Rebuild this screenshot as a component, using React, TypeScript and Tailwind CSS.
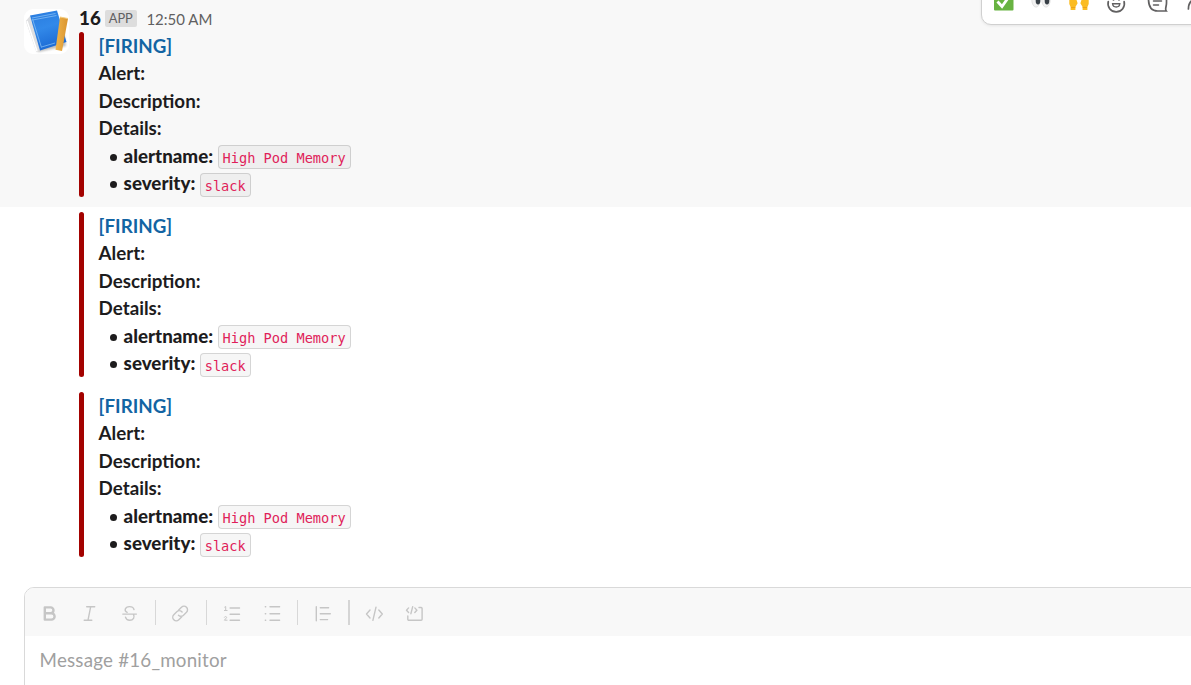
import type { ReactNode } from 'react';

function Code({ children }: { children: ReactNode }) {
  return (
    <code className="ml-[4.4px] mt-[3.3px] flex h-6 items-center rounded-[4px] border border-[#1d1c1d]/15 bg-[#1d1c1d]/[0.04] px-[4px] pt-[2.6px] font-['DejaVu_Sans_Mono',monospace] text-[13.65px] font-normal leading-5 text-[#e01e5a]">
      {children}
    </code>
  );
}

function Detail({ label, value }: { label: string; value: string }) {
  return (
    <li className="flex h-[27.5px] items-start pl-[11.2px]">
      <span className="mr-[6.8px] mt-[12px] size-[7px] shrink-0 rounded-full bg-[#1d1c1d]" />
      <b>{label}</b>
      <Code>{value}</Code>
    </li>
  );
}

function Attachment() {
  return (
    <div className="flex h-[165px] gap-[14.6px]">
      <div className="w-[5px] rounded-lg bg-[#a30200]" />
      <div className="-mt-[0.3px] text-[18.75px] font-bold leading-[27.5px]">
        <div className="text-[#1264a3]">[FIRING]</div>
        <div>Alert:</div>
        <div>Description:</div>
        <div>Details:</div>
        <ul>
          <Detail label="alertname:" value="High Pod Memory" />
          <Detail label="severity:" value="slack" />
        </ul>
      </div>
    </div>
  );
}

function Avatar() {
  return (
    <svg className="h-[45px] w-[45px] shrink-0" viewBox="0 0 45 45">
      <defs>
        <linearGradient id="cover" x2="0.3" y2="1">
          <stop offset="0" stopColor="#287ade" />
          <stop offset="0.5" stopColor="#3289e9" />
          <stop offset="1" stopColor="#1c6bd5" />
        </linearGradient>
        <linearGradient id="pencil">
          <stop offset="0" stopColor="#f0b44b" />
          <stop offset="1" stopColor="#da9530" />
        </linearGradient>
        <filter id="soft" x="-20%" y="-20%" width="140%" height="140%">
          <feGaussianBlur stdDeviation="0.8" />
        </filter>
      </defs>
      <rect width="45" height="45" rx="9" fill="#fff" />
      <path d="M4 13 14 43 42 37 38 11Z" fill="#777" opacity=".5" filter="url(#soft)" />
      <path d="M1.8 12 6 7 16.5 41 12.5 43Z" fill="#dedfe1" />
      <path d="M3 12 13 42" stroke="#fff" strokeWidth="1.5" />
      <path d="M6 6.5 33 1.5 42.5 33 16 41.5Z" fill="url(#cover)" />
      <path d="M8 9 31.5 4.5M8.5 11 32.5 6.5M8.5 10 17.5 38.5M17.5 38 31 34" stroke="#8ec4f7" strokeWidth=".7" fill="none" />
      <path d="m36 8 8 1.5-6 32.5-6.5-1.2Z" fill="url(#pencil)" />
      <path d="m36 8 8 1.5" stroke="#f4ce83" />
    </svg>
  );
}

function ReactionBar() {
  return (
    <div className="absolute left-[981px] top-[-16px] h-[41px] w-[240px] rounded-[10px] border border-[#d0d0d0] bg-white shadow-[0_1px_3px_rgba(0,0,0,0.08)]">
      <svg className="h-full w-full" viewBox="982 -15 238 39" fill="none">
        <rect x="994" y="-9" width="19.5" height="19.5" rx="1" fill="#68b342" />
        <path d="m997.5 1.5 4.5 5 8.5-12" stroke="#fff" strokeWidth="2.8" />
        <g fill="#f1f1f1" stroke="#d5d5d5" strokeWidth=".6">
          <ellipse cx="1036" cy="-.8" rx="4.3" ry="8" />
          <ellipse cx="1046" cy="-.8" rx="4.3" ry="8" />
        </g>
        <ellipse cx="1038" cy="1" rx="2.3" ry="3.4" fill="#384047" />
        <ellipse cx="1047" cy="1" rx="2.3" ry="3.4" fill="#384047" />
        <path
          d="M1069.3-3h3l4 2.2 1.3 4-2.2 3.8v3h-4.8V7l-1.3-3ZM1088.7-3h-3l-4 2.2-1.3 4 2.2 3.8v3h4.8V7l1.3-3Z"
          fill="#fbbc22"
        />
        <path d="M1071 7.5h4.3M1082.7 7.5h4.3" stroke="#efa315" />
        <g stroke="#616061" strokeWidth="1.7" strokeLinecap="round">
          <path d="M1108.3 1.5a8.2 8.2 0 1 0 15.8 0" />
          <path d="M1112.6 3.7h7.2c-.4 4.3-6.8 4.3-7.2 0Z" strokeWidth="1.4" />
          <path d="M1113.5-1.5v1.3M1119-1.5v1.3" strokeWidth="2" />
          <path d="M1148.5-1c0 8 3.6 12 9.2 12h8.5c-1.5-2 .3-4.4.3-8V-3" />
          <path d="M1153.5 1h8M1153.5 5h5" strokeWidth="1.5" />
          <path d="M1188.4 9c0-4 1.3-7 4-9" />
        </g>
      </svg>
    </div>
  );
}

function Divider({ thick = false }: { thick?: boolean }) {
  return <div className={thick ? 'h-[25px] w-[2px] bg-[#d5d5d5]' : 'h-[25px] w-px bg-[#d8d8d8]'} />;
}

function Icon({ children }: { children: ReactNode }) {
  return (
    <svg
      className="size-5 shrink-0"
      viewBox="0 0 20 20"
      fill="none"
      stroke="#c6c6c6"
      strokeWidth="1.4"
      strokeLinecap="round"
      strokeLinejoin="round"
    >
      {children}
    </svg>
  );
}

function Composer() {
  return (
    <div className="ml-6 mt-[20px] h-[110px] w-[1180px] overflow-hidden rounded-[10px] border border-[#d9d9d9] bg-white">
      <div className="flex h-[48px] items-center bg-[#f8f8f8] pl-[14px] pt-px">
        <Icon>
          <path strokeWidth="2.4" d="M5.8 4.4h5.8a2.9 2.9 0 0 1 0 5.8H5.8h6.6a3.2 3.2 0 0 1 0 6.4H5.8Z" />
        </Icon>
        <div className="w-5" />
        <Icon>
          <path d="M7.7 3.7h8M5.2 17.2h7.6M11.7 3.7 9 17.2" />
        </Icon>
        <div className="w-5" />
        <Icon>
          <path d="M15 6.5c-.5-1.9-2-2.9-4.5-2.9-4.8 0-5.6 4.5-2.3 5.7M3.8 11.1h13.6M6.5 14.1c.5 2 2 3.1 4.2 3.1 3.8 0 5.3-3.2 3.8-5.5" />
        </Icon>
        <div className="w-[16px]" />
        <Divider />
        <div className="w-[14px]" />
        <Icon>
          <path d="m8.7 7 2.8-2.8a3.5 3.5 0 0 1 5 5l-3 3a3.5 3.5 0 0 1-5 0M12.1 9l-.3-.3a3.5 3.5 0 0 0-5 0l-3 3a3.5 3.5 0 0 0 5 5l2.8-2.8" />
        </Icon>
        <div className="w-[16px]" />
        <Divider />
        <div className="w-[15px]" />
        <Icon>
          <path d="M8.1 5h9.4M8.1 11.3h9.4M8.1 17.2h9.4" />
          <path strokeWidth="1" d="m2.7 4.1 1-.6v4M2.4 7.5h2.7M2.4 14.2c.4-1.1 2.5-.8 2.2.4l-2.2 2.6h2.7" />
        </Icon>
        <div className="w-5" />
        <Icon>
          <path d="M8 3.8h9.6M8 10.8h9.6M8 17.2h9.6M3.3 3.8h.4M3.3 10.8h.4M3.3 17.2h.4" />
        </Icon>
        <div className="w-[15px]" />
        <Divider />
        <div className="w-[15px]" />
        <Icon>
          <path d="M3.3 3.7v14M7.3 4.8h8.3M7.3 10.8h10M7.3 16.6h7.3" />
        </Icon>
        <div className="w-[15px]" />
        <Divider thick />
        <div className="w-[14px]" />
        <Icon>
          <path d="M6 7 2.5 11 6 15M14.8 7l3.5 4-3.5 4M12 4.1 8.9 17.4" />
        </Icon>
        <div className="w-5" />
        <Icon>
          <path d="M4.6 4.9 2.5 7.2l2.1 2.3M10.8 4.9l2.1 2.3-2.1 2.3M8.7 3.7 6.9 10.7M15 4.5h2.1a1 1 0 0 1 1 1v10.8a1 1 0 0 1-1 1H4.8a1 1 0 0 1-1-1V13" />
        </Icon>
      </div>
      <div className="pl-[14.6px] pt-[10px] text-[18.75px] font-normal leading-[27.5px] tracking-[0.21px] text-[#a0a0a0]">
        Message #16_monitor
      </div>
    </div>
  );
}

export default function App() {
  return (
    <main className="relative h-[685px] overflow-hidden bg-white font-['Lato',sans-serif] text-[#1d1c1d]">
      <section className="flex h-[207px] bg-[#f8f8f8] pl-6 pt-[9px]">
        <Avatar />
        <div className="ml-[10px]">
          <header className="flex h-[23px] items-start">
            <span className="-mt-[5px] text-[18.75px] font-black leading-[27.5px]">16</span>
            <span className="ml-[4px] mt-px flex h-[17px] items-center rounded-[2px] bg-[#dddddd] px-[4px] pt-px text-[12.8px] text-[#616061]">APP</span>
            <span className="ml-[9.6px] text-[15px] leading-[21px] text-[#616061]">12:50 AM</span>
          </header>
          <Attachment />
        </div>
      </section>
      <section className="h-[180px] pl-[79px] pt-[5px]">
        <Attachment />
      </section>
      <section className="h-[180px] pl-[79px] pt-[5px]">
        <Attachment />
      </section>
      <Composer />
      <ReactionBar />
    </main>
  );
}
